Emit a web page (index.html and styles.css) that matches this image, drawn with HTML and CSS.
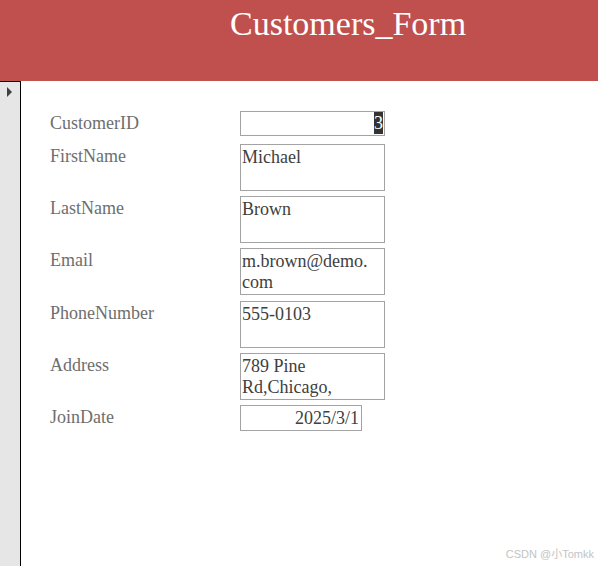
FILE: index.html
```html
<!DOCTYPE html>
<html>
<head>
<meta charset="utf-8">
<link rel="stylesheet" href="styles.css">
</head>
<body>
<div class="header"><span class="title">Customers_Form</span></div>
<div class="main">
  <div class="selector"><span class="arrow"></span></div>
  <div class="form">
    <div class="row first">
      <div class="label">CustomerID</div>
      <div class="box short id"><span class="sel">3</span></div>
    </div>
    <div class="row">
      <div class="label">FirstName</div>
      <div class="box tall">Michael</div>
    </div>
    <div class="row">
      <div class="label">LastName</div>
      <div class="box tall">Brown</div>
    </div>
    <div class="row">
      <div class="label">Email</div>
      <div class="box tall">m.brown@demo.<br>com</div>
    </div>
    <div class="row shift">
      <div class="label">PhoneNumber</div>
      <div class="box tall">555-0103</div>
    </div>
    <div class="row">
      <div class="label">Address</div>
      <div class="box tall">789 Pine<br>Rd,Chicago,</div>
    </div>
    <div class="row">
      <div class="label">JoinDate</div>
      <div class="box date">2025/3/1</div>
    </div>
  </div>
</div>
<div class="watermark">CSDN @小Tomkk</div>
</body>
</html>
```
FILE: styles.css
```css
html, body {
  margin: 0;
  padding: 0;
  height: 100%;
  background: #ffffff;
  overflow: hidden;
}
body {
  position: relative;
  font-family: "Liberation Serif", "Noto Sans CJK SC", serif;
}
.header {
  height: 81px;
  background: #c0504d;
  box-sizing: border-box;
  padding-left: 230px;
  padding-top: 4px;
}
.title {
  display: inline-block;
  color: #ffffff;
  font-size: 34px;
  line-height: 40px;
  white-space: nowrap;
}
.main {
  display: flex;
  height: calc(100% - 81px);
}
.selector {
  width: 20px;
  flex: 0 0 20px;
  background: #e6e6e6;
  border-top: 1px solid #000;
  border-right: 1px solid #000;
  position: relative;
}
.arrow {
  position: absolute;
  left: 7px;
  top: 5px;
  width: 0;
  height: 0;
  border-top: 5px solid transparent;
  border-bottom: 5px solid transparent;
  border-left: 5px solid #404040;
}
.form {
  padding-top: 30px;
  padding-left: 29px;
  display: flex;
  flex-direction: column;
  gap: 5px;
}
.row {
  display: flex;
  align-items: flex-start;
}
.row.first {
  margin-bottom: 3px;
}
.row.shift {
  margin-top: 1px;
}
.label {
  width: 190px;
  flex: 0 0 190px;
  font-size: 18px;
  line-height: 21px;
  padding-top: 2px;
  color: #6e6e6e;
  white-space: nowrap;
}
.box {
  box-sizing: border-box;
  width: 145px;
  border: 1px solid #a3a3a3;
  font-size: 18px;
  line-height: 21px;
  color: #404040;
  padding: 2px 1px 0 1px;
  overflow: hidden;
  white-space: nowrap;
}
.box.tall {
  height: 47px;
}
.box.short {
  height: 25px;
}
.box.id {
  display: flex;
  justify-content: flex-end;
  padding: 0 1px 1px 0;
}
.sel {
  display: block;
  background: #333333;
  color: #ffffff;
  line-height: 22px;
  height: 22px;
}
.box.date {
  width: 122px;
  height: 26px;
  text-align: right;
  padding: 2px 2px 0 1px;
}
.watermark {
  position: absolute;
  right: 4px;
  bottom: 5px;
  font-family: "Liberation Sans", "Noto Sans CJK SC", sans-serif;
  font-size: 11px;
  color: #c4c4c4;
}
```
